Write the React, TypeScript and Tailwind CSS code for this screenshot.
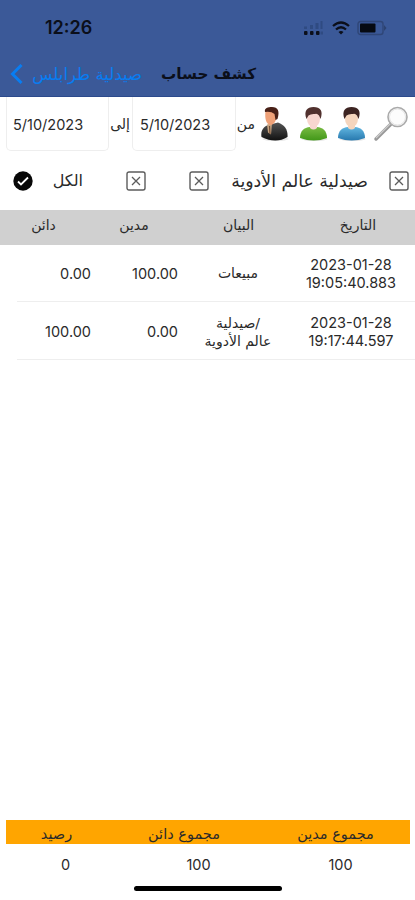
import React from "react";

const ar = "font-['DejaVu_Sans',sans-serif] whitespace-nowrap";

function Cross({ className = "" }: { className?: string }) {
  return (
    <svg viewBox="0 0 20 20" className={"h-5 w-5 shrink-0 " + className} fill="none" stroke="#5c5c5c">
      <rect x="1" y="1" width="18" height="18" rx="2" strokeWidth="1.4" />
      <path d="M6 6l8 8M14 6l-8 8" strokeWidth="1.3" />
    </svg>
  );
}

function Person({ id, hair, skin, light, dark, suit, className = "" }: { id: string; hair: string; skin: string; light: string; dark: string; suit?: boolean; className?: string }) {
  return (
    <svg viewBox="0 0 30 36" className={"h-9 w-[30px] shrink-0 " + className}>
      <defs>
        <linearGradient id={id} x1="0" y1="0" x2="0" y2="1">
          <stop offset="0" stopColor={light} />
          <stop offset="1" stopColor={dark} />
        </linearGradient>
      </defs>
      <ellipse cx="15.5" cy="33" rx="13" ry="2" fill="#000" opacity=".1" />
      <path d={suit ? "M1.500 31C.5 25 3 21 8 19L18 16.500C25 19 28 24 27.500 31Q16 38 1.500 31Z" : "M1 32C1 25 5 21.500 11 21L18 21C24 21.500 28 25 28 32Q15 37 1 32Z"} fill={"url(#" + id + ")"} />
      {suit ? (
        <>
          <path d="M7 18.500l5-1-1 11-3-2z" fill="#c8a582" />
          <path d="M9.500 20l.5 8" stroke="#735038" strokeWidth="1.2" fill="none" />
          <path d="M5.500 5C9 3 15 4 16.500 8C17 13 15 18 11 19C6 19 4.500 12 5.500 5Z" fill={skin} />
          <path d="M5 6C4 2 8 1 12 1C18 1 20 5 17.500 13L15.500 14L14.500 8Q11 5 5 6Z" fill={hair} />
        </>
      ) : (
        <>
          <path d="M11 18h7v4q-3.500 3-7 0z" fill={skin} />
          <ellipse cx="14.500" cy="13" rx="6.500" ry="8" fill={skin} />
          <path d="M7.500 13C4.500 5 8 1 14.500 1C21.500 1 24.500 5 21.500 13L20 9.500Q18 7 16 8Q12 7.500 9.500 9.500Z" fill={hair} />
        </>
      )}
    </svg>
  );
}

export default function App() {
  return (
    <div className="flex h-[900px] w-[415px] flex-col overflow-hidden bg-white font-[Inter,sans-serif] text-[#2a2a2a]">
      <header className="h-[97px] shrink-0 border-b border-[#2c4a8c] bg-[#3b5998] text-[#0b0f1a]">
        <div className="flex h-14 items-center pl-[45px]">
          <span className="w-[258px] text-[18px] font-semibold leading-none">12:26</span>
          <svg viewBox="0 0 22 16" className="h-4 w-[22px]">
            <g fill="#0b0f1a">
              <rect x="1" y="11" width="3.500" height="4" rx="1" /><rect x="7" y="11" width="3.500" height="4" rx="1" /><rect x="13" y="11" width="3.500" height="4" rx="1" />
            </g>
            <g fill="#2f4b82">
              <rect x="1" y="6.500" width="3" height="2.500" /><rect x="7" y="5" width="3" height="4" /><rect x="12.500" y="3" width="3" height="6" /><rect x="17.500" y="1" width="2" height="8" /><rect x="17.500" y="11.500" width="2.500" height="3" />
            </g>
          </svg>
          <svg viewBox="0 0 18 14" className="ml-[7px] h-[14px] w-[18px]" fill="none" stroke="#0b0f1a" strokeWidth="2.300">
            <path d="M1 5Q9-2 17 5M4 8.500Q9 4 14 8.500" />
            <path d="M6.500 11Q9 9 11.500 11L9 13.500Z" fill="#0b0f1a" stroke="none" />
          </svg>
          <svg viewBox="0 0 30 16" className="ml-[7px] h-4 w-[30px]">
            <rect x="1" y="1.500" width="25" height="13" rx="2.500" fill="none" stroke="#2f4677" strokeWidth="1.400" />
            <rect x="3" y="3.500" width="15.500" height="9" rx="1" fill="#060a12" />
            <path d="M27 5l2.500 3L27 11" fill="#2c4271" />
          </svg>
        </div>
        <div className="flex h-9 items-center pl-[10px]">
          <svg viewBox="0 0 13 20" className="h-5 w-[13px]" fill="none" stroke="#087df2" strokeWidth="3"><path d="M11.500 1L2.500 10l9 9" /></svg>
          <span dir="rtl" className={ar + " ml-[9px] w-[110px] pt-0.5 text-[16.500px] text-[#087df2]"}>صيدلية طرابلس</span>
          <span dir="rtl" className={ar + " ml-[18px] w-[96px] text-[15.200px] font-bold"}>كشف حساب</span>
        </div>
      </header>

      <section className="flex h-[54px] shrink-0 items-start">
        <div className="ml-[6px] flex h-[54px] w-[103px] items-center rounded-b-[5px] border border-t-0 border-[#eee] pl-[6px] pt-0.5 text-[14.500px]">5/10/2023</div>
        <span dir="rtl" className={ar + " ml-[2px] mt-[17px] w-[19px] text-[14px] leading-5"}>إلى</span>
        <div className="ml-[2px] flex h-[54px] w-[104px] items-center rounded-b-[5px] border border-t-0 border-[#eee] pl-[7px] pt-0.5 text-[14.500px]">5/10/2023</div>
        <span dir="rtl" className={ar + " ml-[1px] mt-[17px] w-[18px] text-[14px] leading-5"}>من</span>
        <Person id="manager" hair="#482017" skin="#efa178" light="#555" dark="#111" suit className="ml-[5px] mt-[9px]" />
        <Person id="customer" hair="#51312e" skin="#f8d6cf" light="#79bb43" dark="#419718" className="ml-[9px] mt-[9px]" />
        <Person id="user" hair="#3d2422" skin="#f5d5bd" light="#61b6e0" dark="#2778ae" className="ml-[8px] mt-[9px]" />
        <svg viewBox="0 0 36 36" className="ml-[6px] mt-[9px] h-9 w-9 shrink-0">
          <path d="M3 33L18 18" stroke="#999" strokeWidth="3.500" strokeLinecap="round" />
          <path d="M3 32L18 17" stroke="#ccc" strokeWidth="1.300" />
          <circle cx="24.500" cy="11" r="9.500" fill="#fcfcfc" stroke="#aaa" strokeWidth="1.600" />
          <circle cx="24.500" cy="11" r="8" fill="none" stroke="#ddd" strokeWidth=".8" />
        </svg>
      </section>

      <section className="flex h-[59px] shrink-0 items-center">
        <svg viewBox="0 0 20 20" className="ml-[13px] h-5 w-5"><circle cx="10" cy="10" r="9.700" fill="#080808" /><path d="M5 10.500l3 3 7-7" fill="none" stroke="white" strokeWidth="1.800" /></svg>
        <span dir="rtl" className={ar + " ml-[21px] w-[29px] text-[16px]"}>الكل</span>
        <Cross className="ml-[43px]" />
        <Cross className="ml-[43px]" />
        <span dir="rtl" className={ar + " ml-[21px] w-[138px] pt-0.5 text-[17.300px]"}>صيدلية عالم الأدوية</span>
        <Cross className="ml-[21px]" />
      </section>

      <main className="flex-1">
        <div dir="rtl" className={ar + " flex h-[35px] items-center bg-[#d0d0d0] pb-1 text-center text-[14px]"}>
          <span className="w-[114px]">التاريخ</span>
          <span className="w-[125px]">البيان</span>
          <span className="w-[84px]">مدين</span>
          <span className="w-[92px] pr-[5px]">دائن</span>
        </div>
        <div dir="rtl" className="ml-[17px] flex h-[57px] items-center border-b border-[#eee] text-[14.500px]">
          <span dir="ltr" className="w-[128px] pt-px text-center leading-[18px]">2023-01-28<br />19:05:40.883</span>
          <span className={ar + " w-[98px] text-center text-[14px]"}>مبيعات</span>
          <span dir="ltr" className="mr-[11px] w-[74px] pt-0.5 text-right">100.00</span>
          <span dir="ltr" className="mr-[13px] w-[60px] pt-0.5 text-right">0.00</span>
        </div>
        <div dir="rtl" className="ml-[17px] flex h-[58px] items-center border-b border-[#eee] text-[14.500px]">
          <span dir="ltr" className="w-[128px] pt-0.5 text-center leading-[18px]">2023-01-28<br />19:17:44.597</span>
          <span className={ar + " w-[98px] pt-0.5 text-center text-[14px] leading-[18px]"}>/صيدلية<br />عالم الأدوية</span>
          <span dir="ltr" className="mr-[11px] w-[74px] pt-0.5 text-right">0.00</span>
          <span dir="ltr" className="mr-[13px] w-[60px] pt-0.5 text-right">100.00</span>
        </div>
      </main>

      <footer className="h-[80px] shrink-0">
        <div dir="rtl" className={ar + " ml-[6px] mr-[5px] flex h-6 items-center bg-[#ffa500] pt-1.5 text-center text-[14.500px]"}>
          <span className="w-[149px]">مجموع مدين</span>
          <span className="w-[154px]">مجموع دائن</span>
          <span className="w-[101px]">رصيد</span>
        </div>
        <div dir="rtl" className="mx-[6px] flex h-[42px] items-center text-center text-[14.500px]">
          <span className="w-[137px]">100</span><span className="w-[147px]">100</span><span className="w-[119px]">0</span>
        </div>
        <div className="mx-auto h-[5px] w-[148px] rounded-full bg-black" />
      </footer>
    </div>
  );
}
